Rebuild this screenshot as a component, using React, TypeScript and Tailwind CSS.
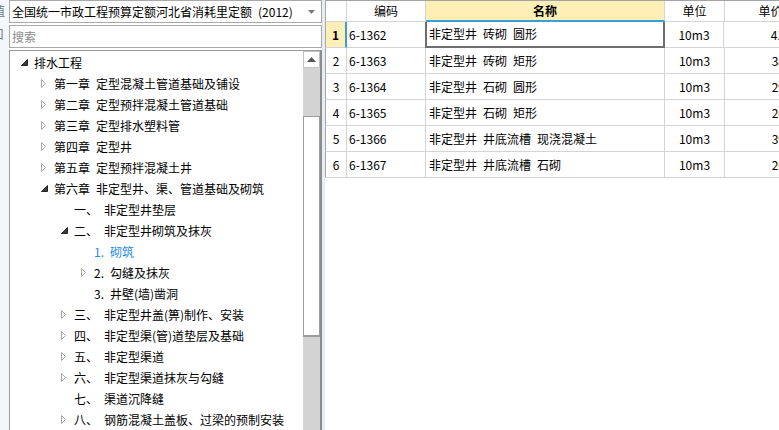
import React from 'react';

type Node = { level: number; text: string; state: 'open' | 'closed' | 'leaf'; active?: boolean };

// wide space, like the half-width space of the original bitmap font
const S = '\u2002';

const nodes: Node[] = [
  { level: 0, text: '排水工程', state: 'open' },
  { level: 1, text: `第一章${S}定型混凝土管道基础及铺设`, state: 'closed' },
  { level: 1, text: `第二章${S}定型预拌混凝土管道基础`, state: 'closed' },
  { level: 1, text: `第三章${S}定型排水塑料管`, state: 'closed' },
  { level: 1, text: `第四章${S}定型井`, state: 'closed' },
  { level: 1, text: `第五章${S}定型预拌混凝土井`, state: 'closed' },
  { level: 1, text: `第六章${S}非定型井、渠、管道基础及砌筑`, state: 'open' },
  { level: 2, text: `一、${S}非定型井垫层`, state: 'leaf' },
  { level: 2, text: `二、${S}非定型井砌筑及抹灰`, state: 'open' },
  { level: 3, text: `1.${S}砌筑`, state: 'leaf', active: true },
  { level: 3, text: `2.${S}勾缝及抹灰`, state: 'closed' },
  { level: 3, text: `3.${S}井壁(墙)凿洞`, state: 'leaf' },
  { level: 2, text: `三、${S}非定型井盖(箅)制作、安装`, state: 'closed' },
  { level: 2, text: `四、${S}非定型渠(管)道垫层及基础`, state: 'closed' },
  { level: 2, text: `五、${S}非定型渠道`, state: 'closed' },
  { level: 2, text: `六、${S}非定型渠道抹灰与勾缝`, state: 'closed' },
  { level: 2, text: `七、${S}渠道沉降缝`, state: 'leaf' },
  { level: 2, text: `八、${S}钢筋混凝土盖板、过梁的预制安装`, state: 'closed' },
];

const indent = ['pl-[10px]', 'pl-[30px]', 'pl-[50px]', 'pl-[70px]'];

const rows = [
  { no: 1, code: '6-1362', name: `非定型井${S}砖砌${S}圆形`, unit: '10m3', price: '4127.61' },
  { no: 2, code: '6-1363', name: `非定型井${S}砖砌${S}矩形`, unit: '10m3', price: '3852.40' },
  { no: 3, code: '6-1364', name: `非定型井${S}石砌${S}圆形`, unit: '10m3', price: '2975.18' },
  { no: 4, code: '6-1365', name: `非定型井${S}石砌${S}矩形`, unit: '10m3', price: '2688.03' },
  { no: 5, code: '6-1366', name: `非定型井${S}井底流槽${S}现浇混凝土`, unit: '10m3', price: '3914.77' },
  { no: 6, code: '6-1367', name: `非定型井${S}井底流槽${S}石砌`, unit: '10m3', price: '2690.52' },
];

const Arrow = ({ state }: { state: Node['state'] }) => {
  if (state === 'open')
    return (
      <svg width="7" height="7" viewBox="0 0 7 7" className="mt-[-1px]">
        <polygon points="6.5,0.5 6.5,6.5 0.5,6.5" fill="#3c3c3c" stroke="#262626" strokeWidth="1" />
      </svg>
    );
  if (state === 'closed')
    return (
      <svg width="6" height="9" viewBox="0 0 6 9">
        <polygon points="0.5,0.5 4.5,4.5 0.5,8.5" fill="#fff" stroke="#a6a6a6" strokeWidth="1" />
      </svg>
    );
  return null;
};

export default function App() {
  return (
    <div className="w-[779px] h-[430px] flex overflow-hidden bg-white text-[12px] leading-[14px] text-black font-['Noto_Sans_CJK_SC','Liberation_Sans',sans-serif]">
      {/* cut off panel on the far left */}
      <div className="w-[9px] shrink-0 bg-[#f3f7fb] overflow-hidden flex flex-col text-[#6a7a8a]">
        <span className="ml-[-7px] mt-[4px] leading-[14px]">值</span>
        <span className="ml-[-8px] mt-[9px] leading-[14px]">口</span>
      </div>

      {/* left panel */}
      <div className="w-[313px] shrink-0 flex flex-col">
        <div className="h-[23px] border border-[#a9a9a9] flex items-center pl-[2px] pr-[6px]">
          <span className="flex-1 whitespace-pre">全国统一市政工程预算定额河北省消耗里定额{S}(2012)</span>
          <svg width="7" height="4" viewBox="0 0 7 4">
            <polygon points="0,0 7,0 3.5,4" fill="#7a7a7a" />
          </svg>
        </div>
        <div className="h-[23px] mt-[2px] border border-[#a9a9a9] flex items-center pl-[2px] text-[#8a8a8a]">搜索</div>
        <div className="flex-1 mt-[2px] border-l border-t border-r-2 border-[#9a9a9a] border-r-[#8c8c8c] flex overflow-hidden">
          <div className="flex-1 pt-[1px]">
            {nodes.map((n, i) => (
              <div key={i} className={`h-[21px] flex items-center ${indent[n.level]}`}>
                <div className="w-[14px] h-full flex items-center pl-[1px]">
                  <Arrow state={n.state} />
                </div>
                <span className={`whitespace-pre ${n.active ? 'text-[#1a8ee8]' : ''}`}>{n.text}</span>
              </div>
            ))}
          </div>
          <div className="w-[17px] bg-[#d3d3d3] flex flex-col">
            <div className="h-[17px] bg-white border border-[#c4c4c4] flex items-center justify-center">
              <svg width="9" height="5" viewBox="0 0 9 5">
                <polygon points="0,5 9,5 4.5,0" fill="#555" />
              </svg>
            </div>
            <div className="h-[48px]" />
            <div className="h-[221px] bg-white border border-b-2 border-[#9c9c9c]" />
          </div>
        </div>
      </div>

      {/* splitter */}
      <div className="w-[3px] shrink-0 bg-[#e7edf3]" />

      {/* grid */}
      <div className="flex-1 overflow-hidden border-t border-[#a3a3a3]">
        <div className="w-[500px]">
          <div className="flex h-[21px]">
            <div className="w-[22px] border-l border-r border-b border-[#d4d4d4] border-l-[#a8a8a8]" />
            <div className="w-[79px] border-r border-b border-[#d4d4d4] flex items-center justify-center">编码</div>
            <div className="w-[239px] border-r border-[#d4d4d4] border-b-2 border-b-[#3a9fd6] bg-[#feefb6] flex items-center justify-center font-bold">名称</div>
            <div className="w-[60px] border-r border-b border-[#d4d4d4] flex items-center justify-center">单位</div>
            <div className="w-[92px] border-r border-b border-[#d4d4d4] flex items-center justify-center">单价</div>
          </div>
          {rows.map((r) => {
            const sel = r.no === 1;
            return (
              <div key={r.no} className="flex h-[26px]">
                <div
                  className={`w-[22px] border-l border-b border-[#d4d4d4] border-l-[#a8a8a8] flex items-center justify-center ${
                    sel ? 'bg-[#feefb6] font-bold border-r-2 border-r-[#3a9fd6]' : 'border-r'
                  }`}
                >
                  {r.no}
                </div>
                <div className="w-[79px] border-r border-b border-[#d4d4d4] flex items-center pl-[2px]">{r.code}</div>
                <div
                  className={`flex items-center whitespace-pre ${
                    sel
                      ? 'border-l-2 border-r-2 border-b-2 border-[#6e6e6e] ml-[-1px] w-[240px] pl-[2px]'
                      : 'w-[239px] border-r border-b border-[#d4d4d4] pl-[3px]'
                  }`}
                >
                  {r.name}
                </div>
                <div className={`border-r border-b border-[#d4d4d4] flex items-center justify-center ${sel ? 'w-[59px]' : 'w-[60px]'}`}>
                  {r.unit}
                </div>
                <div className="w-[92px] border-r border-b border-[#d4d4d4] flex items-center justify-end pr-[1px]">{r.price}</div>
              </div>
            );
          })}
        </div>
      </div>
    </div>
  );
}
